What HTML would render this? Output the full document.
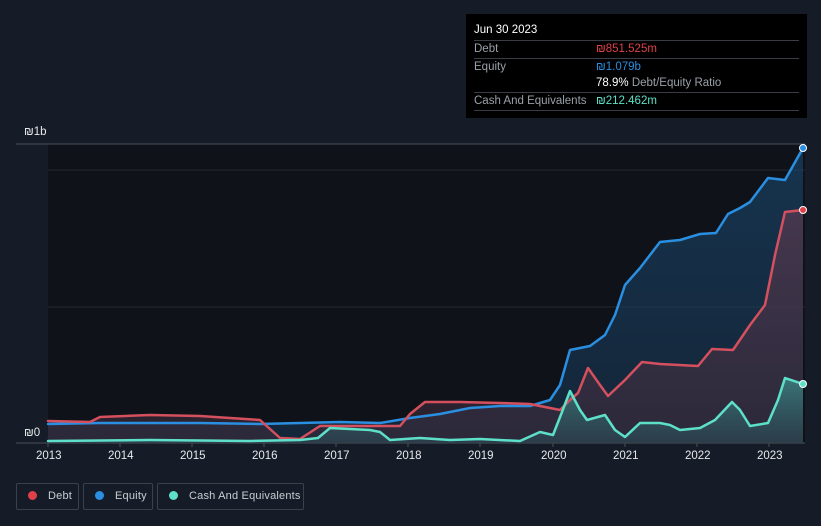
<!DOCTYPE html>
<html><head><meta charset="utf-8"><style>
html,body{margin:0;width:821px;height:526px;overflow:hidden}
body{background:#161c27;font-family:"Liberation Sans",sans-serif;position:relative}
.tip{position:absolute;left:466px;top:14px;width:341px;height:104px;background:#000;color:#fff;font-size:11.5px}
.tip .r{position:absolute;left:8px;right:8px;border-top:1px solid #3a3d44;height:17px;line-height:17px}
.lab{color:#9aa0a8}
.leg{position:absolute;top:483px;height:27px;border:1px solid #3b414c;border-radius:2px;color:#c9cdd3;font-size:11px;letter-spacing:.2px;line-height:25px;box-sizing:border-box;white-space:nowrap}
.dot{display:inline-block;width:9px;height:9px;border-radius:50%;margin:0 11px 0 11px;vertical-align:-1px}
.yr{position:absolute;top:450px;color:#e6e8eb;font-size:11.5px}
</style></head><body>
<svg width="821" height="526" style="position:absolute;left:0;top:0">
<defs>
<linearGradient id="ge" x1="0" y1="0" x2="0" y2="1"><stop offset="0" stop-color="#1a4a72" stop-opacity=".6"/><stop offset="1" stop-color="#1a3a5a" stop-opacity=".5"/></linearGradient>
<linearGradient id="gd" x1="0" y1="0" x2="0" y2="1"><stop offset="0" stop-color="#5a3a50" stop-opacity=".7"/><stop offset="1" stop-color="#3a2a3a" stop-opacity=".6"/></linearGradient>
<linearGradient id="gc" x1="0" y1="0" x2="0" y2="1"><stop offset="0" stop-color="#3fa8a0" stop-opacity=".6"/><stop offset="1" stop-color="#2a5a60" stop-opacity=".4"/></linearGradient>
</defs>
<rect x="48" y="144" width="757" height="299" fill="#0f1218"/>
<line x1="16" y1="144" x2="805" y2="144" stroke="#4a4f57"/>
<line x1="48" y1="170" x2="805" y2="170" stroke="#262a31"/>
<line x1="48" y1="307" x2="805" y2="307" stroke="#262a31"/>
<line x1="16" y1="443" x2="805" y2="443" stroke="#4a4f57"/>
<g stroke="#4a4f57"><line x1="48" y1="443" x2="48" y2="447"/><line x1="120" y1="443" x2="120" y2="447"/><line x1="192" y1="443" x2="192" y2="447"/><line x1="264" y1="443" x2="264" y2="447"/><line x1="336" y1="443" x2="336" y2="447"/><line x1="408" y1="443" x2="408" y2="447"/><line x1="480" y1="443" x2="480" y2="447"/><line x1="553" y1="443" x2="553" y2="447"/><line x1="625" y1="443" x2="625" y2="447"/><line x1="697" y1="443" x2="697" y2="447"/><line x1="769" y1="443" x2="769" y2="447"/></g>
<polygon fill="url(#ge)" points="48,424 100,423 150,423 200,423 260,424 300,423 340,422 380,423 410,418 440,414 470,408 500,406 530,406 550,400 560,385 570,350 590,346 605,335 615,315 625,285 640,268 660,242 680,240 700,234 716,233 728,214 740,208 750,202 768,178 785,180 803,148 803,443 48,443"/>
<polygon fill="url(#gd)" points="48,421 90,422 100,417 150,415 200,416 230,418 260,420 280,438 300,439 320,426 360,426 400,426 410,414 425,402 460,402 500,403 530,404 560,410 570,400 578,393 588,368 600,385 608,396 625,380 642,362 660,364 698,366 712,349 733,350 750,325 765,305 775,255 785,212 803,210 803,443 48,443"/>
<polygon fill="url(#gc)" points="48,441 150,440 250,441 300,440 318,438 330,428 370,430 380,432 390,440 420,438 450,440 480,439 520,441 540,432 553,435 562,412 570,391 580,410 587,420 605,415 615,430 625,437 640,423 660,423 670,425 680,430 700,428 715,420 732,402 740,410 750,426 768,423 778,400 785,378 803,384 803,443 48,443"/>
<g fill="none" stroke-width="2.5" stroke-linejoin="round" stroke-linecap="round">
<polyline stroke="#2a8fe0" points="48,424 100,423 150,423 200,423 260,424 300,423 340,422 380,423 410,418 440,414 470,408 500,406 530,406 550,400 560,385 570,350 590,346 605,335 615,315 625,285 640,268 660,242 680,240 700,234 716,233 728,214 740,208 750,202 768,178 785,180 803,148"/>
<polyline stroke="#d4505e" points="48,421 90,422 100,417 150,415 200,416 230,418 260,420 280,438 300,439 320,426 360,426 400,426 410,414 425,402 460,402 500,403 530,404 560,410 570,400 578,393 588,368 600,385 608,396 625,380 642,362 660,364 698,366 712,349 733,350 750,325 765,305 775,255 785,212 803,210"/>
<polyline stroke="#5ee0c8" points="48,441 150,440 250,441 300,440 318,438 330,428 370,430 380,432 390,440 420,438 450,440 480,439 520,441 540,432 553,435 562,412 570,391 580,410 587,420 605,415 615,430 625,437 640,423 660,423 670,425 680,430 700,428 715,420 732,402 740,410 750,426 768,423 778,400 785,378 803,384"/>
</g>
<circle cx="803" cy="148" r="3.5" fill="#2a8fe0" stroke="#fff"/>
<circle cx="803" cy="210" r="3.5" fill="#e0404a" stroke="#fff"/>
<circle cx="803" cy="384" r="3.5" fill="#5ee0c8" stroke="#fff"/>
<text x="24" y="135" fill="#e6e8eb" font-size="11.5" font-family="Liberation Sans, sans-serif">₪1b</text>
<text x="24" y="436" fill="#e6e8eb" font-size="11.5" font-family="Liberation Sans, sans-serif">₪0</text>
</svg>
<div class="yr" style="left:36px">2013</div><div class="yr" style="left:108px">2014</div><div class="yr" style="left:180px">2015</div><div class="yr" style="left:252px">2016</div><div class="yr" style="left:324px">2017</div><div class="yr" style="left:396px">2018</div><div class="yr" style="left:468px">2019</div><div class="yr" style="left:541px">2020</div><div class="yr" style="left:613px">2021</div><div class="yr" style="left:685px">2022</div><div class="yr" style="left:757px">2023</div>
<div class="tip">
<div style="position:absolute;left:8px;top:10px">Jun 30 2023</div>
<div class="r" style="top:26px"><span class="lab">Debt</span><span style="position:absolute;left:122px;color:#e0404a">₪851.525m</span></div>
<div class="r" style="top:44px"><span class="lab">Equity</span><span style="position:absolute;left:122px;color:#2a8fe0">₪1.079b</span></div>
<div style="position:absolute;left:130px;top:61px;line-height:17px">78.9% <span class="lab">Debt/Equity Ratio</span></div>
<div class="r" style="top:78px"><span class="lab">Cash And Equivalents</span><span style="position:absolute;left:122px;color:#5ee0c8">₪212.462m</span></div>
<div class="r" style="top:96px;height:0"></div>
</div>
<div class="leg" style="left:16px;width:63px"><span class="dot" style="background:#e0404a"></span>Debt</div>
<div class="leg" style="left:83px;width:70px"><span class="dot" style="background:#2a8fe0"></span>Equity</div>
<div class="leg" style="left:157px;width:147px"><span class="dot" style="background:#5ee0c8"></span>Cash And Equivalents</div>
</body></html>
